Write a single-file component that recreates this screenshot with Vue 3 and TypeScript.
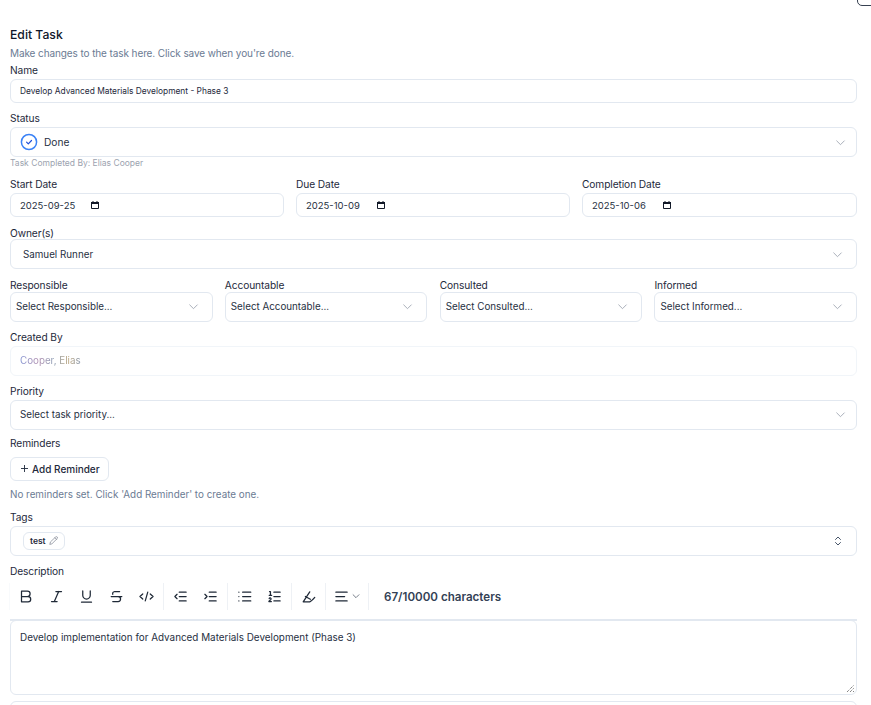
<script setup lang="ts">
const dates = [
  { label: 'Start Date', value: '2025-09-25' },
  { label: 'Due Date', value: '2025-10-09' },
  { label: 'Completion Date', value: '2025-10-06' },
]
const raci = ['Responsible', 'Accountable', 'Consulted', 'Informed']
</script>

<template>
  <div class="page">
    <div class="corner"></div>
    <header class="head">
      <h2>Edit Task</h2>
      <p>Make changes to the task here. Click save when you're done.</p>
    </header>

    <div class="field f-name">
      <label>Name</label>
      <div class="input small-text">Develop Advanced Materials Development - Phase 3</div>
    </div>

    <div class="field f-status">
      <label>Status</label>
      <div class="select status">
        <span class="status-value">
          <svg class="done" width="18" height="18" viewBox="0 0 18 18" fill="none">
            <circle cx="9" cy="9" r="7.6" stroke="#3b82f6" stroke-width="1.5" />
            <path d="M6.6 9.2 8.3 10.9l3.2-3.4" stroke="#1d4ed8" stroke-width="1.2" stroke-linecap="round" stroke-linejoin="round" />
          </svg>
          Done
        </span>
        <svg class="chev" width="13" height="13" viewBox="0 0 24 24"><path d="m5 9 7 7 7-7" /></svg>
      </div>
      <div class="caption">Task Completed By: Elias Cooper</div>
    </div>

    <div class="dates">
      <div v-for="d in dates" :key="d.label" class="field">
        <label>{{ d.label }}</label>
        <div class="input date">
          <span class="date-text">{{ d.value }}</span>
          <svg width="8" height="8" viewBox="0 0 8 8" fill="none">
            <path d="M.5 1.5h7v6h-7Z" stroke="#111827" stroke-width="1" />
            <path d="M0 1h8v2H0ZM1.5 0h1v1h-1ZM5.5 0h1v1h-1Z" fill="#111827" />
          </svg>
        </div>
      </div>
    </div>

    <div class="field f-owner">
      <label>Owner(s)</label>
      <div class="select owner">
        <span>Samuel Runner</span>
        <svg class="chev" width="13" height="13" viewBox="0 0 24 24"><path d="m5 9 7 7 7-7" /></svg>
      </div>
    </div>

    <div class="raci">
      <div v-for="r in raci" :key="r" class="field">
        <label>{{ r }}</label>
        <div class="select compact">
          <span>Select {{ r }}...</span>
          <svg class="chev" width="13" height="13" viewBox="0 0 24 24"><path d="m5 9 7 7 7-7" /></svg>
        </div>
      </div>
    </div>

    <div class="field f-gap">
      <label>Created By</label>
      <div class="select readonly"><span class="muted-name">Cooper, Elias</span></div>
    </div>

    <div class="field f-gap">
      <label>Priority</label>
      <div class="select">
        <span>Select task priority...</span>
        <svg class="chev" width="13" height="13" viewBox="0 0 24 24"><path d="m5 9 7 7 7-7" /></svg>
      </div>
    </div>

    <div class="field f-reminders">
      <label>Reminders</label>
      <button class="add" type="button">
        <svg width="7" height="7" viewBox="0 0 7 7" fill="none" stroke="#1e293b" stroke-width="0.9"><path d="M3.5 0v7M0 3.500h7" /></svg>
        Add Reminder
      </button>
      <p class="help">No reminders set. Click 'Add Reminder' to create one.</p>
    </div>

    <div class="field f-tags">
      <label>Tags</label>
      <div class="select tags">
        <span class="tag">test
          <svg width="11" height="11" viewBox="0 0 24 24" fill="none" stroke="#6b7280" stroke-width="1.6" stroke-linecap="round" stroke-linejoin="round">
            <path d="M17 3a2.8 2.8 0 0 1 4 4L7.5 20.5 2 22l1.5-5.5Z" /><path d="m15 5 4 4" />
          </svg>
        </span>
        <svg width="12" height="12" viewBox="0 0 24 24" fill="none" stroke="#475569" stroke-width="2" stroke-linecap="round" stroke-linejoin="round">
          <path d="m7 15 5 5 5-5" /><path d="m7 9 5-5 5 5" />
        </svg>
      </div>
    </div>

    <div class="field f-desc">
      <label>Description</label>
      <div class="toolbar">
        <div class="tgroup first">
          <svg class="ti" viewBox="0 0 24 24"><path d="M4 3.5h9.5a4.2 4.2 0 0 1 0 8.5H4Zm0 8.5h10.5a4.2 4.2 0 0 1 0 8.5H4Z" /></svg>
          <svg class="ti" viewBox="0 0 24 24"><path d="M20 4h-9M13 20H4M15.5 4l-7 16" /></svg>
          <svg class="ti" viewBox="0 0 24 24"><path d="M6 3v7a6 6 0 0 0 12 0V3M4 21h16" /></svg>
          <svg class="ti" viewBox="0 0 24 24"><path d="M17 4H9a3.5 3.5 0 0 0-3 4.500M14.500 12a4 4 0 0 1 0 8H6M3.500 12h17" /></svg>
          <svg class="ti" viewBox="0 0 24 24"><path d="m18 8 4.500 4-4.500 4M6 8l-4.500 4L6 16M14 5l-4 14" /></svg>
        </div>
        <div class="tgroup">
          <svg class="ti" viewBox="0 0 24 24"><path d="M21 5H10M21 12H10M21 19H10M6.500 8.500 3 12l3.500 3.500" /></svg>
          <svg class="ti" viewBox="0 0 24 24"><path d="M21 5H10M21 12H10M21 19H10M3 8.500 6.500 12 3 15.500" /></svg>
        </div>
        <div class="tgroup">
          <svg class="ti" viewBox="0 0 24 24"><path d="M9 5h13M9 12h13M9 19h13M3 5h.01M3 12h.01M3 19h.01" /></svg>
          <svg class="ti" viewBox="0 0 24 24"><path d="M11 5h10M11 12h10M11 19h10M4 4h1.500v6M3.500 10h4M7 20H3c0-1.200 3.500-2.200 3.500-4a1.500 1.500 0 0 0-3-.5" /></svg>
        </div>
        <div class="tgroup">
          <svg class="ti" viewBox="0 0 24 24"><path d="M14 4.500 3.500 20.500H14q3-1 8-7M7 12l8 4.500" /></svg>
        </div>
        <div class="tgroup align">
          <svg class="ti" viewBox="0 0 24 24"><path d="M3 5h18M3 12h14M3 19h18" /></svg>
          <svg class="mini" viewBox="0 0 24 24"><path d="m5 9 7 7 7-7" /></svg>
        </div>
        <span class="count">67/10000 characters</span>
      </div>
      <div class="editor">Develop implementation for Advanced Materials Development (Phase 3)
        <svg class="grip" width="9" height="9" viewBox="0 0 9 9"><path d="M1 8 8 1M4 8l4-4M7 8l1-1" stroke="#555" stroke-width="1" stroke-dasharray="1 1" /></svg>
      </div>
    </div>
    <div class="next"></div>
  </div>
</template>

<style>
html, body { margin: 0; background: #fff; overflow: hidden; }
</style>

<style scoped>
.page {
  position: relative;
  box-sizing: border-box;
  height: 705px;
  overflow: hidden;
  padding: 27px 14px 0 10px;
  font-family: Inter, "Liberation Sans", sans-serif;
  color: #0f172a;
}
.corner {
  position: absolute;
  top: -12px;
  right: -10px;
  width: 22px;
  height: 16px;
  border: 1px solid #374151;
  border-radius: 5px;
}
.head h2 { margin: 0; font-size: 12.2px; line-height: 15px; font-weight: 500; }
.head p { margin: 4px 0 0; font-size: 10px; letter-spacing: -0.1px; line-height: 14px; color: #6b7b93; }
.field { display: flex; flex-direction: column; min-width: 0; }
label { font-size: 10.2px; letter-spacing: -0.1px; line-height: 12px; color: #1e293b; margin-bottom: 3px; }
.f-name { margin-top: 4px; }
.input, .select {
  box-sizing: border-box;
  border: 1px solid #e2e8f0;
  border-radius: 6px;
  background: #fff;
  display: flex;
  align-items: center;
}
.input { height: 24px; padding: 0 9px; }
.small-text { font-size: 8.4px; color: #1e293b; }
.select {
  height: 30px;
  padding: 0 9px;
  justify-content: space-between;
  font-size: 9.8px;
  color: #27303f;
}
.chev { fill: none; stroke: #9ca3af; stroke-width: 1.6; stroke-linecap: round; stroke-linejoin: round; flex: none; }
.f-status { margin-top: 9px; }
.status-value { display: flex; align-items: center; gap: 6px; font-size: 10.2px; }
.done { flex: none; }
.caption { font-size: 8.5px; line-height: 12px; color: #9ca3af; }
.dates { display: grid; grid-template-columns: 274px 274px 275px; gap: 12px; margin-top: 9px; }
.date { font-size: 9.5px; color: #27303f; }
.date-text { width: 71px; }
.f-owner { margin-top: 10px; }
.f-owner label { margin-bottom: 0; }
.owner { padding: 0 12px; }
.raci { display: grid; grid-template-columns: repeat(4, 1fr); gap: 12.3px; margin-top: 10px; }
.raci label { margin-bottom: 1px; }
.compact { padding: 0 12px 1px 5px; }
.f-gap { margin-top: 9px; }
.f-gap .select { padding-bottom: 1px; }
.readonly { border-color: #f1f5f9; }
.muted-name {
  background: linear-gradient(90deg, #7f8fd0, #b08fb0 30%, #8b9bb3 55%, #b8a27a 80%, #8b9bb3);
  -webkit-background-clip: text;
  background-clip: text;
  color: transparent;
}
.f-reminders { margin-top: 7px; }
.f-reminders label { margin-bottom: 8px; }
.add {
  align-self: flex-start;
  display: flex;
  align-items: center;
  gap: 4px;
  box-sizing: border-box;
  width: 99px;
  height: 24px;
  padding: 0 0 1px 10px;
  border: 1px solid #e2e8f0;
  border-radius: 6px;
  background: #fff;
  font: inherit;
  font-size: 10px;
  font-weight: 500;
  color: #1e293b;
}
.help { margin: 6.5px 0 0; font-size: 9.85px; line-height: 13px; color: #6b7b93; }
.f-tags { margin-top: 10px; }
.tags { padding: 0 12px; }
.tag {
  display: inline-flex;
  align-items: center;
  gap: 3px;
  box-sizing: border-box;
  width: 42px;
  height: 18px;
  padding: 0 6px;
  border: 1px solid #e2e8f0;
  border-radius: 6px;
  font-size: 8.5px;
  font-weight: 600;
  color: #1e293b;
}
.f-desc { margin-top: 9px; }
.f-desc label { margin-bottom: 6px; }
.toolbar {
  display: flex;
  align-items: flex-start;
  height: 27px;
  padding-bottom: 9px;
  border-bottom: 2px solid #e2e8f0;
}
.tgroup {
  display: flex;
  align-items: center;
  gap: 15px;
  height: 27px;
  padding: 0 9px;
  border-right: 1px solid #eef1f5;
}
.first { padding: 0 9.5px 0 8.5px; border-left: 1px solid #f8fafc; margin-left: -1px; }
.align { gap: 2px; padding: 0 7px 0 8px; }
.ti { width: 15px; height: 15px; fill: none; stroke: #1f2937; stroke-width: 2; stroke-linecap: round; stroke-linejoin: round; }
.mini { width: 10px; height: 10px; fill: none; stroke: #4b5563; stroke-width: 1.8; stroke-linecap: round; stroke-linejoin: round; }
.count { margin: 1px 0 0 15px; font-size: 11.6px; line-height: 27px; font-weight: 600; color: #334155; }
.editor {
  position: relative;
  box-sizing: border-box;
  height: 75px;
  margin-top: -1px;
  padding: 9px 9px;
  border: 1px solid #e2e8f0;
  border-radius: 6px;
  font-size: 9.9px;
  line-height: 14px;
  color: #27303f;
}
.grip { position: absolute; right: 1px; bottom: 1px; }
.next { height: 20px; margin-top: 6px; border: 1px solid #e2e8f0; border-radius: 6px; }
</style>
